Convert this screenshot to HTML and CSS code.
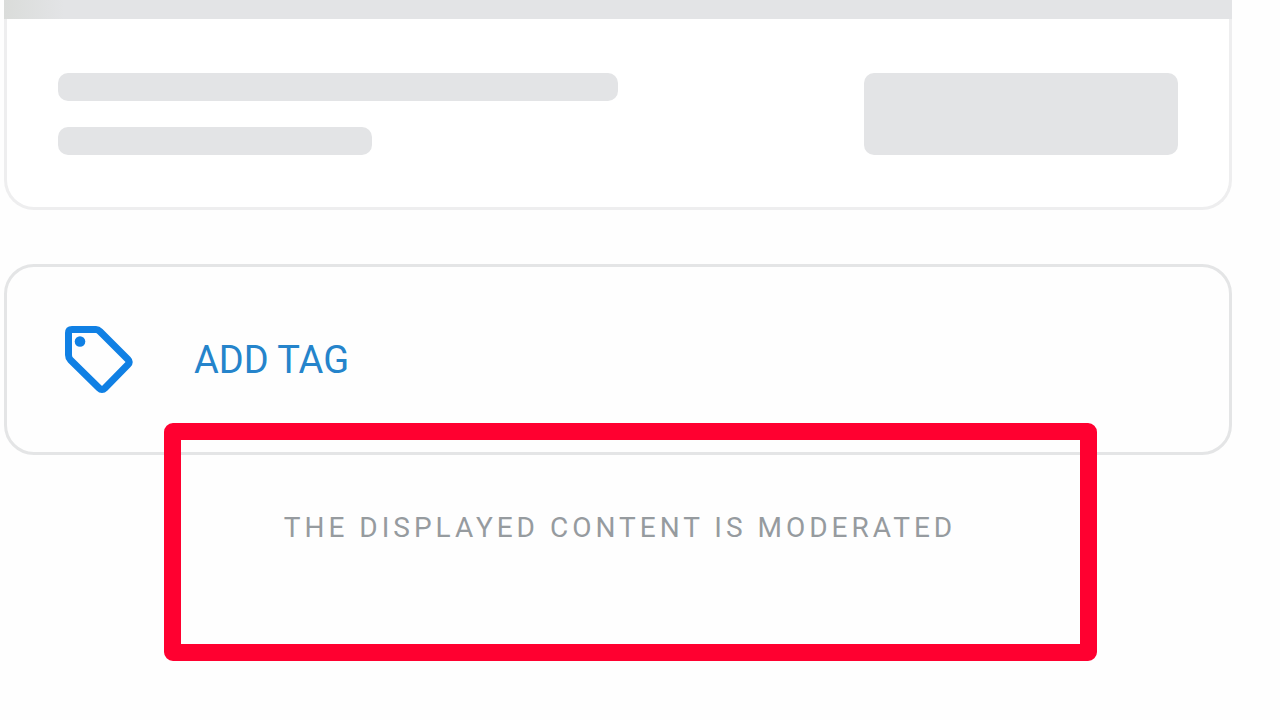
FILE: index.html
```
<!DOCTYPE html>
<html lang="en">
<head>
  <meta charset="UTF-8">
  <meta name="viewport" content="width=device-width, initial-scale=1">
  <title>Add Tag</title>
  <link rel="stylesheet" href="styles.css">
</head>
<body>

  <main class="page">
    <div class="preview">
      <div class="preview-image"></div>
      <div class="preview-body">
        <div class="lines">
          <div class="line"></div>
          <div class="line short"></div>
        </div>
        <div class="block"></div>
      </div>
    </div>

    <button type="button" class="add-tag">
      <svg class="tag-icon" viewBox="0 0 70 70" aria-hidden="true">
        <path d="M8 4.500H32Q34 4.500 36 6.500L64 34.500Q66.500 37 64 39.500L41 63Q38 66 35 63L6.500 35Q4.500 33 4.500 30V8Q4.500 4.500 8 4.500Z" fill="none" stroke="#1080e4" stroke-width="7" stroke-linejoin="round"/>
        <circle cx="16" cy="16.500" r="5.300" fill="#1080e4"/>
      </svg>
      <span>ADD TAG</span>
    </button>

    <div class="notice">
      <p>THE DISPLAYED CONTENT IS MODERATED</p>
      <div class="highlight"></div>
    </div>
  </main>

</body>
</html>
```

FILE: styles.css
```
* {
  box-sizing: border-box;
}
body {
  margin: 0;
  background: #fefefe;
  font-family: Roboto, "Liberation Sans", sans-serif;
}
.page {
  padding: 0 48px 0 4px;
}
.preview-image {
  height: 19px;
  background: linear-gradient(to right, #dadcda, #e3e4e6 60px);
}
.preview-body {
  display: flex;
  justify-content: space-between;
  padding: 54px 51px 52px;
  border: 3px solid #eeeeef;
  border-top: none;
  border-radius: 0 0 30px 30px;
  background: #fff;
}
.lines {
  width: 50%;
}
.line {
  height: 28px;
  border-radius: 10px;
  background: #e3e4e6;
}
.line.short {
  width: 56%;
  margin-top: 26px;
}
.block {
  width: 28%;
  border-radius: 10px;
  background: #e3e4e6;
}
.add-tag {
  display: flex;
  align-items: center;
  gap: 60px;
  width: 100%;
  height: 191px;
  margin-top: 54px;
  padding: 0 57px;
  border: 3px solid #e4e5e6;
  border-radius: 30px;
  background: #fefefe;
  color: #2584cb;
  font-family: inherit;
  font-size: 38px;
  cursor: pointer;
}
.tag-icon {
  width: 70px;
  height: 70px;
}
.notice {
  position: relative;
  padding: 53px 0 172px 4px;
}
.notice p {
  margin: 0;
  text-align: center;
  color: #969b9f;
  font-size: 28px;
  line-height: 40px;
  letter-spacing: 4px;
}
/* red frame drawn over the notice and the card edge */
.highlight {
  position: absolute;
  top: -32px;
  left: 13%;
  width: 76%;
  height: 238px;
  border: 17px solid #ff0030;
  border-radius: 9px;
}
```
